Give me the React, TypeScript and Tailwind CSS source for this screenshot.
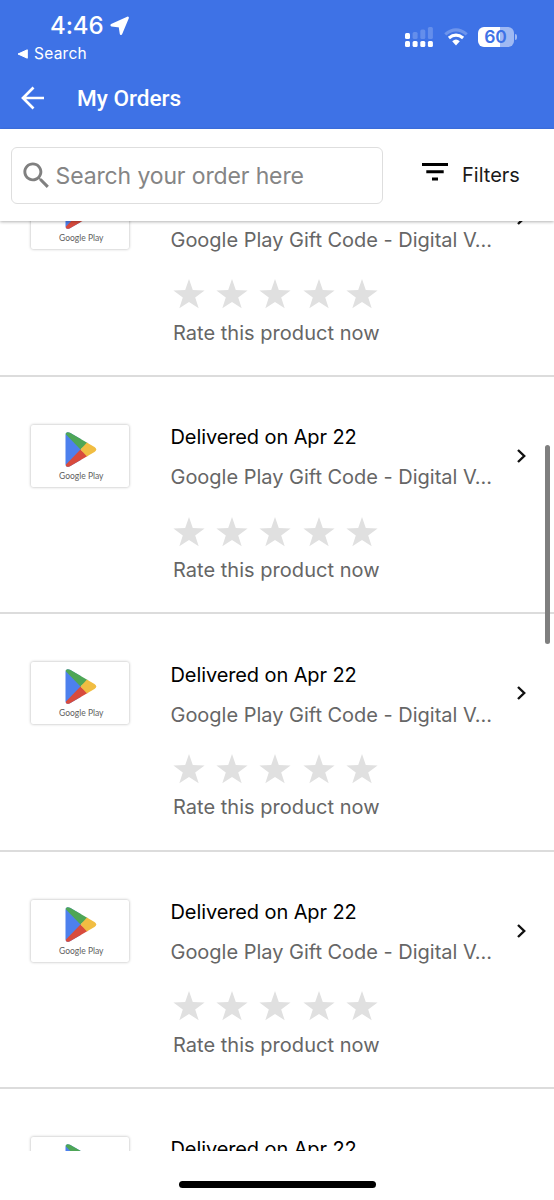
import clsx from "clsx";

type Order = {
  id: number;
  status: string;
  title: string;
};

const orders: Order[] = [1, 2, 3, 4, 5].map((id) => ({
  id,
  status: "Delivered on Apr 22",
  title: "Google Play Gift Code - Digital V...",
}));

const StatusBar = () => (
  <div className="flex h-[68px] justify-between text-white">
    <div className="pt-[12px] pl-[17px]">
      <div className="flex h-7 items-center gap-[6px] pl-[33px]">
        <span className="text-[24px] leading-7 font-medium tracking-[-0.1px]">
          4:46
        </span>
        <svg width="20" height="20" viewBox="0 0 20 20" className="-mt-px">
          <path
            d="M17.7 1.8 11 17.8 9.8 10.2 1.6 9.2Z"
            fill="white"
            stroke="white"
            strokeWidth="2.4"
            strokeLinejoin="round"
          />
        </svg>
      </div>
      <div className="flex h-[27px] items-center gap-[6px]">
        <svg width="11" height="10" viewBox="0 0 11 10">
          <path d="M1 5 10.3 0.8v8.4Z" fill="white" stroke="white" strokeLinejoin="round" />
        </svg>
        <span className="text-[15.5px] leading-6 tracking-[0.25px]">Search</span>
      </div>
    </div>

    <div className="flex items-start pt-[27px] pr-[37px]">
      <svg width="28" height="20" viewBox="0 0 28 20" fill="white">
        <rect x="0" y="6" width="5" height="6" rx="1.5" />
        <rect x="7.6" y="5" width="5" height="7" rx="1.5" opacity="0.2" />
        <rect x="15.3" y="2.5" width="5" height="9.5" rx="1.5" opacity="0.2" />
        <rect x="22.9" y="0" width="5" height="12" rx="1.5" opacity="0.2" />
        <rect x="0" y="14" width="5" height="6" rx="1.5" />
        <rect x="7.6" y="14" width="5" height="6" rx="1.5" />
        <rect x="15.3" y="14" width="5" height="6" rx="1.5" />
        <rect x="22.9" y="14" width="5" height="6" rx="1.5" />
      </svg>
      <svg
        width="24"
        height="19"
        viewBox="0 0 24 19"
        fill="none"
        stroke="white"
        strokeWidth="3.2"
        className="ml-[11px]"
      >
        <path d="M1.3 7.4Q12 -1.8 22.7 7.4" opacity="0.25" />
        <path d="M4.9 11Q12 5.2 19.1 11" />
        <path d="M8.2 14.2Q12 11 15.8 14.2L12 18.4Z" fill="white" stroke="none" />
      </svg>
      <div className="ml-[10px] flex h-5 items-center gap-[1px]">
        <div className="flex h-5 w-[36px] items-center justify-center rounded-[6px] bg-linear-to-r from-white from-60% to-[#9fb9f3] to-60% pr-[1px]">
          <span className="text-[17.5px] leading-5 font-semibold text-[#3e72e6]">60</span>
        </div>
        <div className="h-[6px] w-[2px] rounded-r-full bg-[#9fb9f3]" />
      </div>
    </div>
  </div>
);

const SearchBar = () => (
  <div className="relative z-10 flex h-[92px] items-start bg-white pt-[18px] pl-[11px] shadow-[0_1px_3px_rgba(0,0,0,0.3)]">
    <div className="flex h-[57px] w-[372px] items-center rounded-[6px] border-[1.5px] border-[#dedede] pl-[7px]">
      <svg width="35" height="35" viewBox="0 0 24 24" fill="#808080" className="-mt-[1px]">
        <path d="M15.5 14h-.79l-.28-.27C15.41 12.59 16 11.11 16 9.5 16 5.91 13.09 3 9.5 3S3 5.91 3 9.5 5.91 16 9.5 16c1.61 0 3.09-.59 4.23-1.57l.27.28v.79l5 4.99L20.49 19l-4.99-5zm-6 0C7.01 14 5 11.99 5 9.5S7.01 5 9.5 5 14 7.01 14 9.5 11.99 14 9.5 14z" />
      </svg>
      <span className="mt-[2px] ml-[1.5px] text-[23px] tracking-[-0.13px] whitespace-nowrap text-[#858585]">
        Search your order here
      </span>
    </div>
    <div className="ml-[39px] flex h-[54px] items-center gap-[14px]">
      <svg width="26" height="18" viewBox="0 0 26 18" fill="black" className="-mt-[4px]">
        <path d="M0 0h26v3H0zM4.3 7.3h17.4v3H4.3zM10 14.5h6v3h-6z" />
      </svg>
      <span className="mt-px text-[20px] text-[#1a1a1a]">Filters</span>
    </div>
  </div>
);

const GooglePlayCard = () => (
  <div className="flex h-[62px] w-[98px] shrink-0 flex-col items-center rounded-[2px] bg-white pt-[7px] pl-[3.5px] shadow-[0_0_3px_rgba(0,0,0,0.32)]">
    <svg width="32" height="35" viewBox="0 0 32 35" className="shrink-0">
      <clipPath id="play-shape">
        <path d="M0.5 3Q0.7 -1 5 0.7L29.5 15Q33 17.5 29.5 20L5 34.3Q0.7 36 0.5 32Z" />
      </clipPath>
      <g clipPath="url(#play-shape)">
        <path d="M0 0h16v35H0z" fill="#4d80ed" />
        <path d="M0 0h8L24 10.5 15.5 17.5 0 1.5Z" fill="#4ea656" />
        <path d="M0 35h8L24 24.5 15.5 17.5 0 33.5Z" fill="#d84b3d" />
        <path d="M22.2 10.2 15.5 17.5 22.2 24.8H32V10.2Z" fill="#f1bd42" />
      </g>
    </svg>
    <span className="mt-[3px] font-['Lato'] text-[8.5px] leading-[12px] whitespace-nowrap text-[#606060]">
      Google Play
    </span>
  </div>
);

const Star = () => (
  <svg width="32" height="30" viewBox="0 0 32 30" fill="#e0e0e0">
    <path d="M16 0 19.8 11.1 31.6 11.4 22.2 18.5 25.7 29.3 16 22.9 6.3 29.3 9.8 18.5 0.4 11.4 12.2 11.1Z" />
  </svg>
);

const OrderRow = ({ order, last }: { order: Order; last: boolean }) => (
  <div
    className={clsx(
      "flex h-[237.4px] items-start pt-[48px] pl-[30.5px]",
      !last && "border-b-2 border-[#dcdcdc]"
    )}
  >
    <GooglePlayCard />
    <div className="-mt-[0.5px] ml-[42px] w-[323px] shrink-0 whitespace-nowrap">
      <p className="text-[20px] leading-[26px] tracking-[-0.1px] text-black">{order.status}</p>
      <p className="mt-[14px] text-[20px] leading-[26px] tracking-[-0.02px] text-[#666]">
        {order.title}
      </p>
      <div className="mt-[26.4px] ml-[2.3px] flex gap-[11.3px]">
        {[1, 2, 3, 4, 5].map((n) => (
          <Star key={n} />
        ))}
      </div>
      <p className="mt-[10.3px] ml-[2.5px] text-[20px] leading-[26px] tracking-[0.03px] text-[#666]">
        Rate this product now
      </p>
    </div>
    <svg
      width="12"
      height="16"
      viewBox="0 0 12 16"
      fill="none"
      stroke="#111"
      strokeWidth="2.4"
      className="mt-[23px] ml-[22px]"
    >
      <path d="M2 2 8.2 8 2 14" />
    </svg>
  </div>
);

const App = () => {
  return (
    <div className="relative flex h-[1200px] w-[554px] flex-col overflow-hidden bg-white font-['Inter',sans-serif]">
      <header className="h-[129px] shrink-0 bg-[#3e72e6]">
        <StatusBar />
        <div className="flex h-[60px] items-center pl-[21px] text-white">
          <svg
            width="24"
            height="24"
            viewBox="0 0 24 24"
            fill="none"
            stroke="white"
            strokeWidth="2.7"
          >
            <path d="M23 12H2.5M12.5 1.5 2 12l10.5 10.5" />
          </svg>
          <h1 className="mt-[2px] ml-8 font-['Roboto'] text-[22.6px] font-medium">My Orders</h1>
        </div>
      </header>

      <SearchBar />

      <main className="h-[930px] shrink-0 overflow-hidden">
        <div className="-mt-[81.6px]">
          {orders.map((order, i) => (
            <OrderRow key={order.id} order={order} last={i === orders.length - 1} />
          ))}
        </div>
      </main>

      <footer className="flex h-[49px] shrink-0 justify-center pt-[30px]">
        <div className="h-[7px] w-[197px] rounded-full bg-black" />
      </footer>

      {/* scroll indicator */}
      <div className="absolute top-[445px] right-[4px] h-[199px] w-[5px] rounded-full bg-[#7f7f7f]" />
    </div>
  );
};

export default App;
